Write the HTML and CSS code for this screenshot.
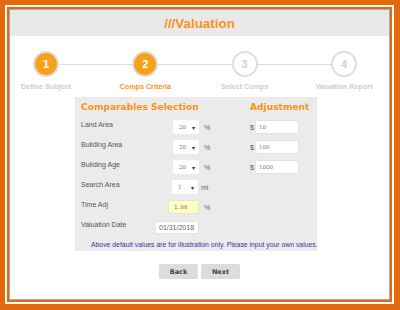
FILE: index.html
```html
<!DOCTYPE html>
<html lang="en">
<head>
    <meta charset="UTF-8">
    <meta name="viewport" content="width=device-width, initial-scale=1.0">
    <title>Valuation</title>
    <link rel="stylesheet" href="styles.css">
</head>
<body>

    <div class="frame">
        <div class="page">

            <div class="header">
                <h1>///Valuation</h1>
            </div>

            <div class="stepper">
                <div class="step done">
                    <div class="circle">1</div>
                    <span>Define Subject</span>
                </div>
                <div class="step active">
                    <div class="circle">2</div>
                    <span>Comps Criteria</span>
                </div>
                <div class="step">
                    <div class="circle">3</div>
                    <span>Select Comps</span>
                </div>
                <div class="step">
                    <div class="circle">4</div>
                    <span>Valuation Report</span>
                </div>
            </div>

            <div class="panel">
                <div class="panel-head">
                    <h2>Comparables Selection</h2>
                    <h2>Adjustment</h2>
                </div>

                <div class="row">
                    <label>Land Area</label>
                    <div class="ctrl"><div class="select">20 <b>&#9662;</b></div></div>
                    <span class="unit">%</span>
                    <div class="adj">$ <input type="text" value="10"></div>
                </div>
                <div class="row">
                    <label>Building Area</label>
                    <div class="ctrl"><div class="select">20 <b>&#9662;</b></div></div>
                    <span class="unit">%</span>
                    <div class="adj">$ <input type="text" value="100"></div>
                </div>
                <div class="row">
                    <label>Building Age</label>
                    <div class="ctrl"><div class="select">20 <b>&#9662;</b></div></div>
                    <span class="unit">%</span>
                    <div class="adj">$ <input type="text" value="1000"></div>
                </div>
                <div class="row">
                    <label>Search Area</label>
                    <div class="ctrl"><div class="select mi">1 <b>&#9662;</b></div></div>
                    <span class="unit unit-mi">mi</span>
                </div>
                <div class="row">
                    <label>Time Adj</label>
                    <div class="ctrl"><input class="time-adj" type="text" value="1.00"></div>
                    <span class="unit">%</span>
                </div>
                <div class="row row-date">
                    <label>Valuation Date</label>
                    <div class="ctrl"><input class="date" type="text" value="01/31/2018"></div>
                </div>

                <p class="note">Above default values are for illustration only. Please input your own values.</p>
            </div>

            <div class="buttons">
                <button class="btn">Back</button>
                <button class="btn">Next</button>
            </div>

        </div>
    </div>

</body>
</html>
```

FILE: styles.css
```css
body {
    margin: 0;
    padding: 5px 6px 6px 5px;
    background: #e5680d;
    font-family: 'Liberation Sans', Arial, sans-serif;
    height: 310px;
    box-sizing: border-box;
}

.frame {
    border: 2px solid #fff;
    padding: 2px;
    background: #e5680d;
    height: 100%;
    box-sizing: border-box;
}

.page {
    background: #fff;
    border: 1px solid #a9a9a9;
    height: 100%;
    box-sizing: border-box;
}

.header {
    background: #e9e9e9;
    height: 26px;
    display: flex;
    align-items: center;
    justify-content: center;
}

.header h1 {
    margin: 0;
    font-size: 13.4px;
    font-weight: bold;
    color: #f7941d;
}

.stepper {
    position: relative;
    display: flex;
    justify-content: space-between;
    padding: 15px 10px 0 1px;
    height: 46px;
}

.stepper::before {
    content: "";
    position: absolute;
    left: 36px;
    right: 45px;
    top: 28px;
    height: 1px;
    background: #dcdcdc;
}

.step {
    position: relative;
    width: 70px;
    display: flex;
    flex-direction: column;
    align-items: center;
}

.circle {
    width: 22px;
    height: 22px;
    border-radius: 50%;
    border: 2px solid #dedede;
    background: #fff;
    color: #cfcfcf;
    font-size: 11px;
    font-weight: bold;
    display: flex;
    align-items: center;
    justify-content: center;
}

.step span {
    margin-top: 5px;
    font-size: 7.2px;
    font-weight: bold;
    color: #cdcdcd;
    white-space: nowrap;
}

.step.done .circle,
.step.active .circle {
    background: #f7a01b;
    color: #fff;
}

.step.active span {
    color: #f7941d;
}

.panel {
    width: 242px;
    height: 154px;
    margin-left: 65px;
    background: #ebebeb;
    padding: 4px 0 0 6px;
    box-sizing: border-box;
}

.panel-head {
    display: grid;
    grid-template-columns: 169px auto;
    height: 16px;
}

.panel-head h2 {
    margin: 0;
    font-family: 'DejaVu Sans', Verdana, sans-serif;
    font-size: 9.1px;
    font-weight: bold;
    color: #f7941d;
    line-height: 12px;
}

.row {
    display: grid;
    grid-template-columns: 74px 44px 51px auto;
    align-items: center;
    height: 20px;
    font-size: 7px;
    color: #555;
}

.row label {
    align-self: start;
    padding-top: 4px;
}

.row-date {
    height: 21px;
}

.ctrl {
    display: flex;
    justify-content: flex-end;
}

.select {
    width: 26px;
    height: 14px;
    box-sizing: border-box;
    background: #fff;
    border-radius: 2px;
    padding: 0 4px 0 6px;
    display: flex;
    justify-content: space-between;
    align-items: center;
    font-family: 'DejaVu Serif', serif;
    font-size: 5.5px;
    color: #777;
}

.select b {
    font-size: 6px;
    color: #333;
}

.select.mi {
    margin-right: 1px;
}

.unit {
    padding-left: 5px;
    font-size: 7px;
    color: #666;
}

.unit-mi {
    padding-left: 2px;
}

.adj {
    display: flex;
    align-items: center;
    font-size: 7px;
    color: #555;
}

input {
    box-sizing: border-box;
    height: 14px;
    border: 1px solid #e2e2e2;
    border-radius: 2px;
    background: #fff;
    outline: none;
    margin: 0;
}

.adj input {
    width: 44px;
    margin-left: 1px;
    padding: 0 3px;
    font-family: 'DejaVu Serif', serif;
    font-size: 5.5px;
    color: #777;
}

.time-adj {
    width: 31px;
    background: #ffffc2;
    padding: 0 5px;
    font-family: 'DejaVu Sans Mono', monospace;
    font-size: 5.5px;
    color: #777;
}

.date {
    width: 44px;
    height: 13px;
    padding: 0 3px;
    font-family: 'Liberation Sans', Arial, sans-serif;
    font-size: 7px;
    color: #666;
}

.note {
    margin: 3px 0 0 10px;
    font-size: 6.85px;
    color: #333a99;
    white-space: nowrap;
}

.buttons {
    display: flex;
    justify-content: center;
    gap: 3px;
    margin-top: 13px;
}

.btn {
    width: 39px;
    height: 15px;
    padding: 0;
    border: none;
    border-radius: 2px;
    background: #dcdcdc;
    font-family: 'DejaVu Sans', Verdana, sans-serif;
    font-size: 6.5px;
    font-weight: bold;
    color: #444;
}
```
